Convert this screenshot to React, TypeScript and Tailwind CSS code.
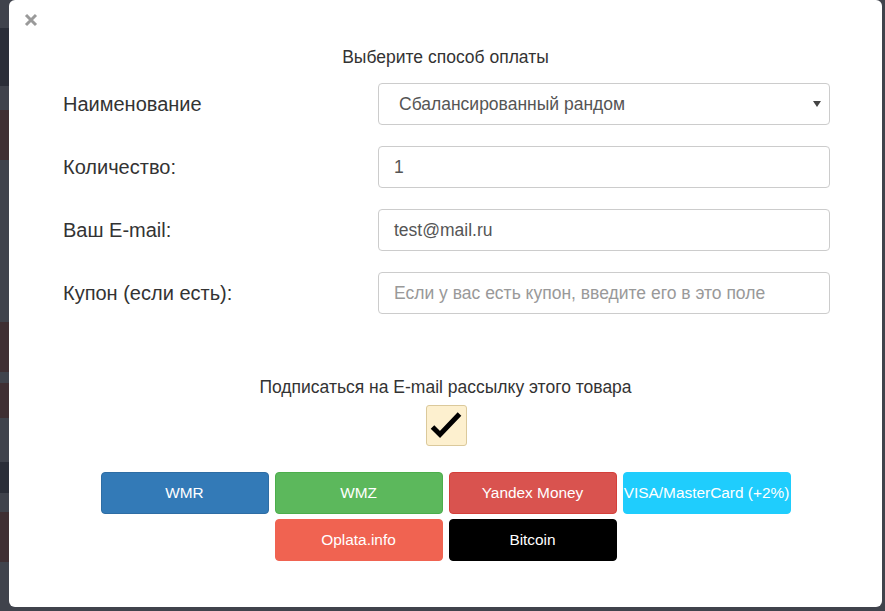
import React from 'react';

const strips: { h: number; c: string }[] = [
  { h: 28, c: 'bg-[#40434c]' },
  { h: 58, c: 'bg-[#2b2e38]' },
  { h: 24, c: 'bg-[#40434c]' },
  { h: 50, c: 'bg-[#3f2f33]' },
  { h: 162, c: 'bg-[#40434c]' },
  { h: 50, c: 'bg-[#3f2f33]' },
  { h: 11, c: 'bg-[#40434c]' },
  { h: 35, c: 'bg-[#3f2f33]' },
  { h: 44, c: 'bg-[#40434c]' },
  { h: 31, c: 'bg-[#2b2e38]' },
  { h: 19, c: 'bg-[#40434c]' },
  { h: 50, c: 'bg-[#3f2f33]' },
  { h: 49, c: 'bg-[#40434c]' },
];

const buttons = [
  { label: 'WMR', cls: 'bg-[#337ab7] border-[#2e6da4]' },
  { label: 'WMZ', cls: 'bg-[#5cb85c] border-[#4cae4c]' },
  { label: 'Yandex Money', cls: 'bg-[#d9534f] border-[#d43f3a]' },
  { label: 'VISA/MasterCard (+2%)', cls: 'bg-[#1fcdfd] border-[#1fcdfd]' },
  { label: 'Oplata.info', cls: 'bg-[#f06351] border-[#f06351]' },
  { label: 'Bitcoin', cls: 'bg-black border-black' },
];

const Row: React.FC<{ label: string; children: React.ReactNode }> = ({ label, children }) => (
  <div className="flex items-center h-[42px] mb-[21px]">
    <label className="w-[315px] shrink-0 text-[20px] text-[#333]">{label}</label>
    {children}
  </div>
);

const inputCls =
  'flex-1 h-[42px] border border-[#ccc] rounded-[4px] px-[15px] text-[17.5px] text-[#555] flex items-center';

export default function App() {
  return (
    <div className="flex w-[885px] h-[611px] bg-[#40434c] overflow-hidden font-['Liberation_Sans',Arial,sans-serif]">
      {/* page behind the overlay */}
      <div className="w-[9px] shrink-0 flex flex-col">
        {strips.map((s, i) => (
          <div key={i} className={s.c} style={{ height: s.h }} />
        ))}
      </div>

      {/* Modal */}
      <div className="w-[873px] h-[607px] shrink-0 bg-white rounded-[6px] flex flex-col">
        <div className="h-[45px] pl-[15px] pt-[13px]">
          <svg width="14" height="14" viewBox="0 0 14 14">
            <path d="M2 2L12 12M12 2L2 12" stroke="#9a9a9a" strokeWidth="3" />
          </svg>
        </div>
        <div className="text-center text-[17.5px] leading-[22px] text-[#333] mt-[1px] mb-[15px]">
          Выберите способ оплаты
        </div>

        <div className="pl-[54px] pr-[52px]">
          <Row label="Наименование">
            <div className={`${inputCls} pl-[20px] pr-[8px] justify-between`}>
              <span>Сбалансированный рандом</span>
              <svg width="8" height="6" viewBox="0 0 8 6">
                <path d="M0 0H8L4 6Z" fill="#444" />
              </svg>
            </div>
          </Row>
          <Row label="Количество:">
            <div className={inputCls}>1</div>
          </Row>
          <Row label="Ваш E-mail:">
            <div className={inputCls}>test@mail.ru</div>
          </Row>
          <Row label="Купон (если есть):">
            <div className={`${inputCls} text-[#999]`}>Если у вас есть купон, введите его в это поле</div>
          </Row>
        </div>

        <div className="mt-[41px] text-center text-[17.5px] leading-[22px] text-[#333]">
          Подписаться на E-mail рассылку этого товара
        </div>
        <div className="flex justify-center mt-[7px]">
          <div className="w-[41px] h-[41px] bg-[#fdf0cf] border border-[#dbc99b] rounded-[3px] ml-[1px]">
            <svg width="39" height="39" viewBox="0 0 39 39">
              <path d="M5.5 21L13 28.5L32.5 8" stroke="#000" strokeWidth="5" fill="none" />
            </svg>
          </div>
        </div>

        <div className="flex flex-wrap justify-center gap-x-[6px] gap-y-[5px] mt-[26px] px-[90px]">
          {buttons.map((b) => (
            <div
              key={b.label}
              className={`w-[168px] h-[42px] rounded-[4px] border ${b.cls} text-white text-[15.4px] px-[6px] flex items-center justify-center whitespace-nowrap`}
            >
              {b.label}
            </div>
          ))}
        </div>
      </div>
    </div>
  );
}
